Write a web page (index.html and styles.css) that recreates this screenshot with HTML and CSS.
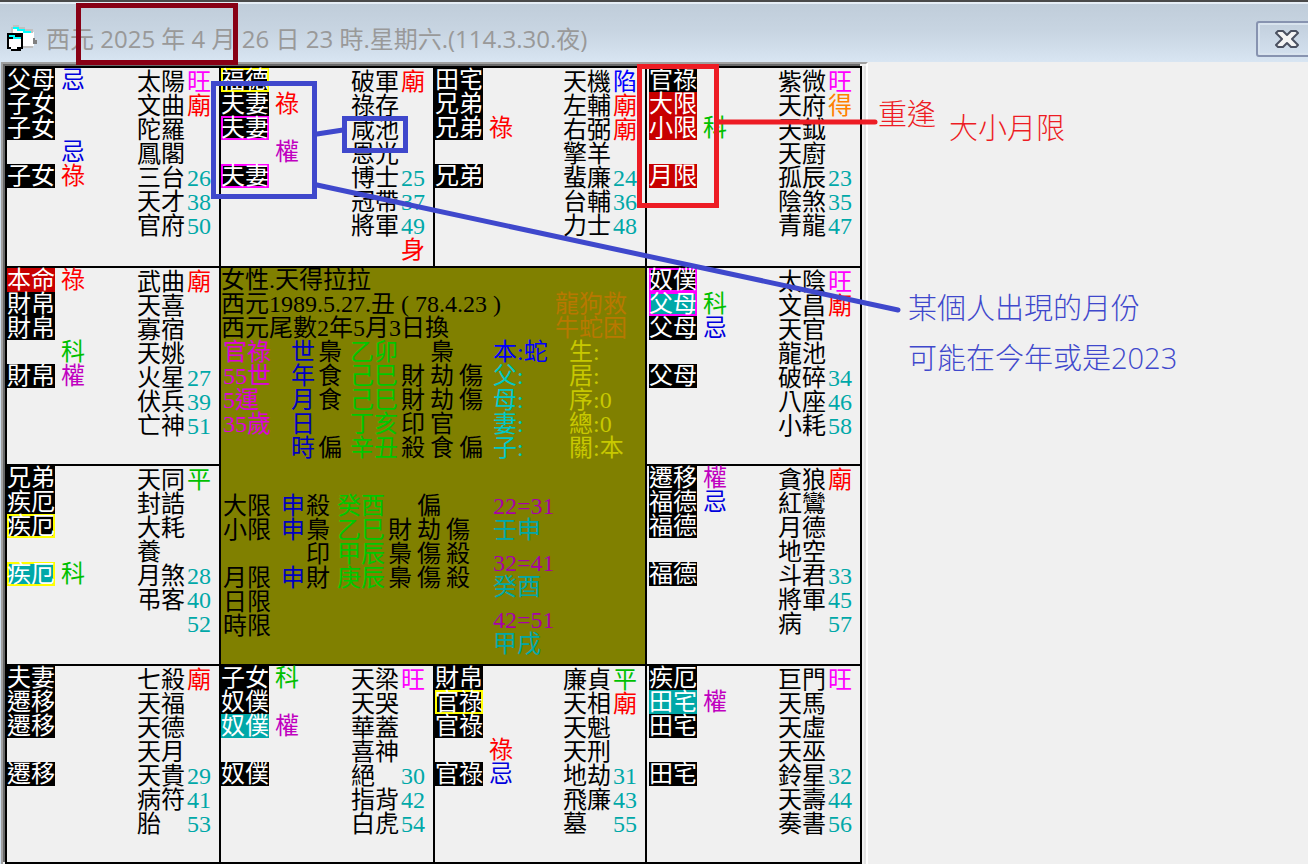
FILE: index.html
```html
<!DOCTYPE html>
<html lang="zh-Hant">
<head>
    <meta charset="UTF-8">
    <meta name="viewport" content="width=device-width, initial-scale=1.0">
    <title>西元 2025 年 4 月 26 日 23 時</title>
    <link rel="stylesheet" href="styles.css">
</head>
<body>
    <div class="window">
        <header class="titlebar">
            <svg class="app-icon" width="32" height="28" viewBox="0 0 32 28" shape-rendering="crispEdges">
                <path d="M6 3h8v2h8v2h5v14h-2v2h-9V9H6z" fill="#fff"/>
                <path d="M6 0h6v2h6v2h8v4h-2V6h-8V4H8V2H6v6H4V2h2z" fill="#c0c0c0"/>
                <path d="M6 2h6v2h6v2h6v2h-8V6h-6V4H6z" fill="#00ffff"/>
                <path d="M26 13h2v2h2v4h-4z" fill="#808080"/>
                <path d="M16 21h10v2H16z" fill="#c0c0c0"/>
                <path d="M0 8h16v16h-2v2H4v-2H0z" fill="#000"/>
                <path d="M2 14h12v8h-4v2H4v-2H2z" fill="#fff"/>
                <path d="M2 10h6v2h6v2H6v-2H2z" fill="#00ffff"/>
            </svg>
            <h1>西元 2025 年 4 月 26 日 23 時.星期六.(114.3.30.夜)</h1>
            <button class="close" type="button" aria-label="關閉">
                <svg width="24" height="18" viewBox="0 0 24 18">
                    <path d="M3 1h5l4 4 4-4h5l2 2-6 6 6 6-2 2h-5l-4-4-4 4H3l-2-2 6-6-6-6z" fill="#f4f4f4" stroke="#4a5060" stroke-width="2" stroke-linejoin="round"/>
                </svg>
            </button>
        </header>

        <main class="frame">
            <div class="board">
                <section class="cell">
                    <ul class="palaces"><li>父母</li><li>子女</li><li>子女</li><li class="none"></li><li>子女</li></ul>
                    <ul class="marks"><li class="ji">忌</li><li></li><li></li><li class="ji">忌</li><li class="lu">祿</li></ul>
                    <ul class="stars"><li>太陽</li><li>文曲</li><li>陀羅</li><li>鳳閣</li><li>三台</li><li>天才</li><li>官府</li></ul>
                    <ul class="ages"><li class="wang">旺</li><li class="miao">廟</li><li></li><li></li><li>26</li><li>38</li><li>50</li></ul>
                </section>
                <section class="cell">
                    <ul class="palaces"><li class="yellow">福德</li><li>夫妻</li><li class="pink">夫妻</li><li class="none"></li><li class="pink">夫妻</li></ul>
                    <ul class="marks"><li></li><li class="lu">祿</li><li></li><li class="quan">權</li></ul>
                    <ul class="stars"><li>破軍</li><li>祿存</li><li>咸池</li><li>恩光</li><li>博士</li><li>冠帶</li><li>將軍</li></ul>
                    <ul class="ages"><li class="miao">廟</li><li></li><li></li><li></li><li>25</li><li>37</li><li>49</li><li class="miao">身</li></ul>
                </section>
                <section class="cell">
                    <ul class="palaces"><li>田宅</li><li>兄弟</li><li>兄弟</li><li class="none"></li><li>兄弟</li></ul>
                    <ul class="marks"><li></li><li></li><li class="lu">祿</li></ul>
                    <ul class="stars"><li>天機</li><li>左輔</li><li>右弼</li><li>擎羊</li><li>蜚廉</li><li>台輔</li><li>力士</li></ul>
                    <ul class="ages"><li class="xian">陷</li><li class="miao">廟</li><li class="miao">廟</li><li></li><li>24</li><li>36</li><li>48</li></ul>
                </section>
                <section class="cell cell-edge">
                    <ul class="palaces"><li>官祿</li><li class="red">大限</li><li class="red">小限</li><li class="none"></li><li class="red">月限</li></ul>
                    <ul class="marks"><li></li><li></li><li class="ke">科</li></ul>
                    <ul class="stars"><li>紫微</li><li>天府</li><li>天鉞</li><li>天廚</li><li>孤辰</li><li>陰煞</li><li>青龍</li></ul>
                    <ul class="ages"><li class="wang">旺</li><li class="de">得</li><li></li><li></li><li>23</li><li>35</li><li>47</li></ul>
                </section>

                <section class="cell">
                    <ul class="palaces"><li class="red">本命</li><li>財帛</li><li>財帛</li><li class="none"></li><li>財帛</li></ul>
                    <ul class="marks"><li class="lu">祿</li><li></li><li></li><li class="ke">科</li><li class="quan">權</li></ul>
                    <ul class="stars"><li>武曲</li><li>天喜</li><li>寡宿</li><li>天姚</li><li>火星</li><li>伏兵</li><li>亡神</li></ul>
                    <ul class="ages"><li class="miao">廟</li><li></li><li></li><li></li><li>27</li><li>39</li><li>51</li></ul>
                </section>

                <section class="center">
                    <div class="profile">
                        <div>
                            <p>女性.天得拉拉</p>
                            <p>西元1989.5.27.丑 ( 78.4.23 )</p>
                            <p>西元尾數2年5月3日換</p>
                        </div>
                        <p class="omen">龍狗救<br>牛蛇困</p>
                    </div>
                    <table class="pillars">
                        <colgroup><col class="c-label"><col class="c-time"><col class="c-god"><col class="c-stem"><col class="c-hide"><col class="c-hide"><col class="c-last"><col class="c-kin"><col></colgroup>
                        <tr><th class="luck">官祿</th><td class="time">世</td><td>梟</td><td class="stem">乙卯</td><td></td><td>梟</td><td></td><td class="self">本:蛇</td><td class="info">生:</td></tr>
                        <tr><th class="luck">55世</th><td class="time">年</td><td>食</td><td class="stem">己巳</td><td>財</td><td>劫</td><td>傷</td><td class="kin">父:</td><td class="info">居:</td></tr>
                        <tr><th class="luck">5運</th><td class="time">月</td><td>食</td><td class="stem">己巳</td><td>財</td><td>劫</td><td>傷</td><td class="kin">母:</td><td class="info">序:0</td></tr>
                        <tr><th class="luck">35歲</th><td class="time">日</td><td></td><td class="stem">丁亥</td><td>印</td><td>官</td><td></td><td class="kin">妻:</td><td class="info">總:0</td></tr>
                        <tr><th></th><td class="time">時</td><td>偏</td><td class="stem">辛丑</td><td>殺</td><td>食</td><td>偏</td><td class="kin">子:</td><td class="info">關:本</td></tr>
                    </table>
                    <div class="limits">
                        <table>
                            <colgroup><col class="l-label"><col class="l-time"><col class="l-god"><col class="c-stem"><col class="c-hide"><col class="c-hide"><col class="l-last"></colgroup>
                            <tr><th>大限</th><td class="time">申</td><td>殺</td><td class="stem">癸酉</td><td></td><td>偏</td><td></td></tr>
                            <tr><th>小限</th><td class="time">申</td><td>梟</td><td class="stem">乙巳</td><td>財</td><td>劫</td><td>傷</td></tr>
                            <tr><th></th><td></td><td>印</td><td class="stem">甲辰</td><td>梟</td><td>傷</td><td>殺</td></tr>
                            <tr><th>月限</th><td class="time">申</td><td>財</td><td class="stem">庚辰</td><td>梟</td><td>傷</td><td>殺</td></tr>
                            <tr><th>日限</th></tr>
                            <tr><th>時限</th></tr>
                        </table>
                        <dl class="decades">
                            <div><dt>22=31</dt><dd>壬申</dd></div>
                            <div><dt>32=41</dt><dd>癸酉</dd></div>
                            <div><dt>42=51</dt><dd>甲戌</dd></div>
                        </dl>
                    </div>
                </section>

                <section class="cell cell-edge">
                    <ul class="palaces"><li class="pink">奴僕</li><li class="teal pink">父母</li><li>父母</li><li class="none"></li><li>父母</li></ul>
                    <ul class="marks"><li></li><li class="ke">科</li><li class="ji">忌</li></ul>
                    <ul class="stars"><li>太陰</li><li>文昌</li><li>天官</li><li>龍池</li><li>破碎</li><li>八座</li><li>小耗</li></ul>
                    <ul class="ages"><li class="wang">旺</li><li class="miao">廟</li><li></li><li></li><li>34</li><li>46</li><li>58</li></ul>
                </section>

                <section class="cell">
                    <ul class="palaces"><li>兄弟</li><li>疾厄</li><li class="yellow">疾厄</li><li class="none"></li><li class="teal yellow">疾厄</li></ul>
                    <ul class="marks"><li></li><li></li><li></li><li></li><li class="ke">科</li></ul>
                    <ul class="stars"><li>天同</li><li>封誥</li><li>大耗</li><li>養</li><li>月煞</li><li>弔客</li></ul>
                    <ul class="ages"><li class="ke">平</li><li></li><li></li><li></li><li>28</li><li>40</li><li>52</li></ul>
                </section>
                <section class="cell cell-edge">
                    <ul class="palaces"><li>遷移</li><li>福德</li><li>福德</li><li class="none"></li><li>福德</li></ul>
                    <ul class="marks"><li class="quan">權</li><li class="ji">忌</li></ul>
                    <ul class="stars"><li>貪狼</li><li>紅鸞</li><li>月德</li><li>地空</li><li>斗君</li><li>將軍</li><li>病</li></ul>
                    <ul class="ages"><li class="miao">廟</li><li></li><li></li><li></li><li>33</li><li>45</li><li>57</li></ul>
                </section>

                <section class="cell">
                    <ul class="palaces"><li>夫妻</li><li>遷移</li><li>遷移</li><li class="none"></li><li>遷移</li></ul>
                    <ul class="marks"></ul>
                    <ul class="stars"><li>七殺</li><li>天福</li><li>天德</li><li>天月</li><li>天貴</li><li>病符</li><li>胎</li></ul>
                    <ul class="ages"><li class="miao">廟</li><li></li><li></li><li></li><li>29</li><li>41</li><li>53</li></ul>
                </section>
                <section class="cell">
                    <ul class="palaces"><li>子女</li><li>奴僕</li><li class="teal">奴僕</li><li class="none"></li><li>奴僕</li></ul>
                    <ul class="marks"><li class="ke">科</li><li></li><li class="quan">權</li></ul>
                    <ul class="stars"><li>天梁</li><li>天哭</li><li>華蓋</li><li>喜神</li><li>絕</li><li>指背</li><li>白虎</li></ul>
                    <ul class="ages"><li class="wang">旺</li><li></li><li></li><li></li><li>30</li><li>42</li><li>54</li></ul>
                </section>
                <section class="cell">
                    <ul class="palaces"><li>財帛</li><li class="yellow">官祿</li><li>官祿</li><li class="none"></li><li>官祿</li></ul>
                    <ul class="marks"><li></li><li></li><li></li><li class="lu">祿</li><li class="ji">忌</li></ul>
                    <ul class="stars"><li>廉貞</li><li>天相</li><li>天魁</li><li>天刑</li><li>地劫</li><li>飛廉</li><li>墓</li></ul>
                    <ul class="ages"><li class="ke">平</li><li class="miao">廟</li><li></li><li></li><li>31</li><li>43</li><li>55</li></ul>
                </section>
                <section class="cell cell-edge">
                    <ul class="palaces"><li>疾厄</li><li class="teal">田宅</li><li>田宅</li><li class="none"></li><li>田宅</li></ul>
                    <ul class="marks"><li></li><li class="quan">權</li></ul>
                    <ul class="stars"><li>巨門</li><li>天馬</li><li>天虛</li><li>天巫</li><li>鈴星</li><li>天壽</li><li>奏書</li></ul>
                    <ul class="ages"><li class="wang">旺</li><li></li><li></li><li></li><li>32</li><li>44</li><li>56</li></ul>
                </section>
            </div>
        </main>

        <!-- hand-drawn notes on top of the chart -->
        <svg class="ink" width="910" height="330" fill="none" stroke-width="5" stroke-linecap="round">
            <path d="M317 134L343 130M317 185L898 310" stroke="#3f48cc"/>
            <path d="M718 122H875" stroke="#ed1c24"/>
        </svg>
        <div class="box box-date"></div>
        <div class="box box-spouse"></div>
        <div class="box box-star"></div>
        <div class="box box-limit"></div>
        <p class="note note-meet">重逢</p>
        <p class="note note-limit">大小月限</p>
        <p class="note note-month">某個人出現的月份<br>可能在今年或是2023</p>
    </div>
</body>
</html>
```

FILE: styles.css
```css
:root {
    --face: #f0f0f0;
    --line: #000;
    --red: #ff0000;
    --blue: #0000dd;
    --green: #00c000;
    --purple: #c000c0;
    --pink: #ff00ff;
    --teal: #00a8a8;
    --ink-red: #ed1c24;
    --ink-blue: #3f48cc;
}

* {
    margin: 0;
    padding: 0;
    box-sizing: border-box;
}

body {
    background: var(--face);
    color: #000;
    font-family: "Liberation Serif", "Noto Sans CJK TC", sans-serif;
    font-size: 24px;
    line-height: 24px;
}

ul {
    list-style: none;
}

.window {
    position: relative;
    min-height: 100vh;
    overflow: hidden;
}

/* Title bar */
.titlebar {
    display: flex;
    align-items: center;
    height: 62px;
    padding: 14px 0 0 7px;
    border-top: 2px solid #4a4a4a;
    background: linear-gradient(#e6eef6 2px, #c0cdda 2px, #c8d5e2 50%, #d8e5f2);
}

.app-icon {
    flex: none;
    margin-right: 7px;
}

.titlebar h1 {
    flex: 1;
    color: #999;
    font-family: "Open Sans", "Noto Sans CJK TC", sans-serif;
    font-size: 24px;
    font-weight: 400;
    white-space: nowrap;
}

.close {
    display: flex;
    align-items: center;
    width: 62px;
    height: 36px;
    margin-right: -10px;
    padding-left: 17px;
    border: 2px solid #8793b0;
    border-radius: 3px;
    background: linear-gradient(#c2cfdd, #d3e0ee);
    box-shadow: inset 0 0 0 2px #d8e3ee;
}

/* Chart */
.frame {
    width: fit-content;
    margin-left: 1px;
    border: solid;
    border-width: 2px 2px 0;
    border-color: #a0a0a0 #fff #a0a0a0 #a0a0a0;
    box-shadow: -1px 0 #d0dfee;
}

.board {
    display: grid;
    grid-template-columns: 212px 212px 210px 213px;
    grid-template-rows: repeat(2, minmax(198px, auto) minmax(196px, auto));
    gap: 2px;
    margin: 2px 4px 0 2px;
    border: 2px solid var(--line);
    background: var(--line);
    box-shadow: -2px -2px #696969, 2px 0 var(--face), 4px 0 #e3e3e3;
}

.cell {
    display: grid;
    grid-template-columns: 52px 24px 1fr 48px 24px;
    column-gap: 2px;
    padding-right: 8px;
    background: var(--face);
}

.cell-edge {
    padding-left: 2px;
}

.cell li {
    height: 24px;
    white-space: nowrap;
}

.palaces li {
    width: 48px;
    background: #000;
    color: #fff;
}

.palaces .red {
    background: #c80000;
}

.palaces .teal {
    background: var(--teal);
}

.palaces .none {
    background: none;
}

.palaces .yellow {
    box-shadow: inset 0 0 0 2px #ffff00;
}

.palaces .pink {
    box-shadow: inset 0 0 0 2px var(--pink);
}

.stars {
    grid-column: 4;
    padding-top: 2px;
}

.ages {
    padding-top: 2px;
    color: var(--teal);
}

.lu,
.miao {
    color: var(--red);
}

.ji {
    color: var(--blue);
}

.xian {
    color: #0000ff;
}

.quan {
    color: var(--purple);
}

.ke {
    color: var(--green);
}

.wang {
    color: var(--pink);
}

.de {
    color: #ff8000;
}

/* Centre panel */
.center {
    grid-column: 2 / 4;
    grid-row: 2 / 4;
    background: #808000;
}

.profile {
    display: flex;
    justify-content: space-between;
    align-items: flex-end;
    padding-right: 18px;
}

.omen {
    color: #b87800;
}

table {
    table-layout: fixed;
    border-collapse: collapse;
}

th,
td {
    height: 24px;
    font-weight: 400;
    text-align: left;
    white-space: nowrap;
}

.pillars {
    width: 100%;
    margin-left: 2px;
}

.c-label { width: 68px; }
.c-time { width: 27px; }
.c-god { width: 32px; }
.c-stem { width: 51px; }
.c-hide { width: 29px; }
.c-last { width: 34px; }
.c-kin { width: 76px; }
.l-label { width: 58px; }
.l-time { width: 25px; }
.l-god { width: 31px; }
.l-last { width: 47px; }

.luck {
    color: #dd00dd;
}

.time {
    color: #0000c0;
}

.stem {
    color: #00c800;
}

.self {
    color: #0000ff;
}

.kin {
    color: #00c8c8;
}

.info {
    color: #c8c800;
}

.limits {
    display: flex;
    align-items: flex-start;
    margin: 34px 0 0 2px;
}

.limits table {
    width: 270px;
}

.decades {
    display: grid;
    gap: 9px;
}

.decades dt {
    color: #a800a8;
}

.decades dd {
    color: var(--teal);
}

/* Notes */
.ink {
    position: absolute;
    top: 0;
    left: 0;
}

.box {
    position: absolute;
    border: 5px solid var(--ink-blue);
}

.box-date {
    top: 3px;
    left: 76px;
    width: 162px;
    height: 62px;
    border-color: #880015;
}

.box-spouse {
    top: 81px;
    left: 211px;
    width: 106px;
    height: 118px;
}

.box-star {
    top: 116px;
    left: 342px;
    width: 66px;
    height: 37px;
}

.box-limit {
    top: 64px;
    left: 637px;
    width: 82px;
    height: 144px;
    border-color: var(--ink-red);
}

.note {
    position: absolute;
    color: var(--ink-red);
    font-family: "Open Sans", "Noto Sans CJK TC", sans-serif;
    font-size: 29px;
    font-weight: 300;
    line-height: 50px;
    white-space: nowrap;
}

.note-meet {
    top: 89px;
    left: 878px;
}

.note-limit {
    top: 103px;
    left: 949px;
}

.note-month {
    top: 283px;
    left: 908px;
    color: var(--ink-blue);
}
```
